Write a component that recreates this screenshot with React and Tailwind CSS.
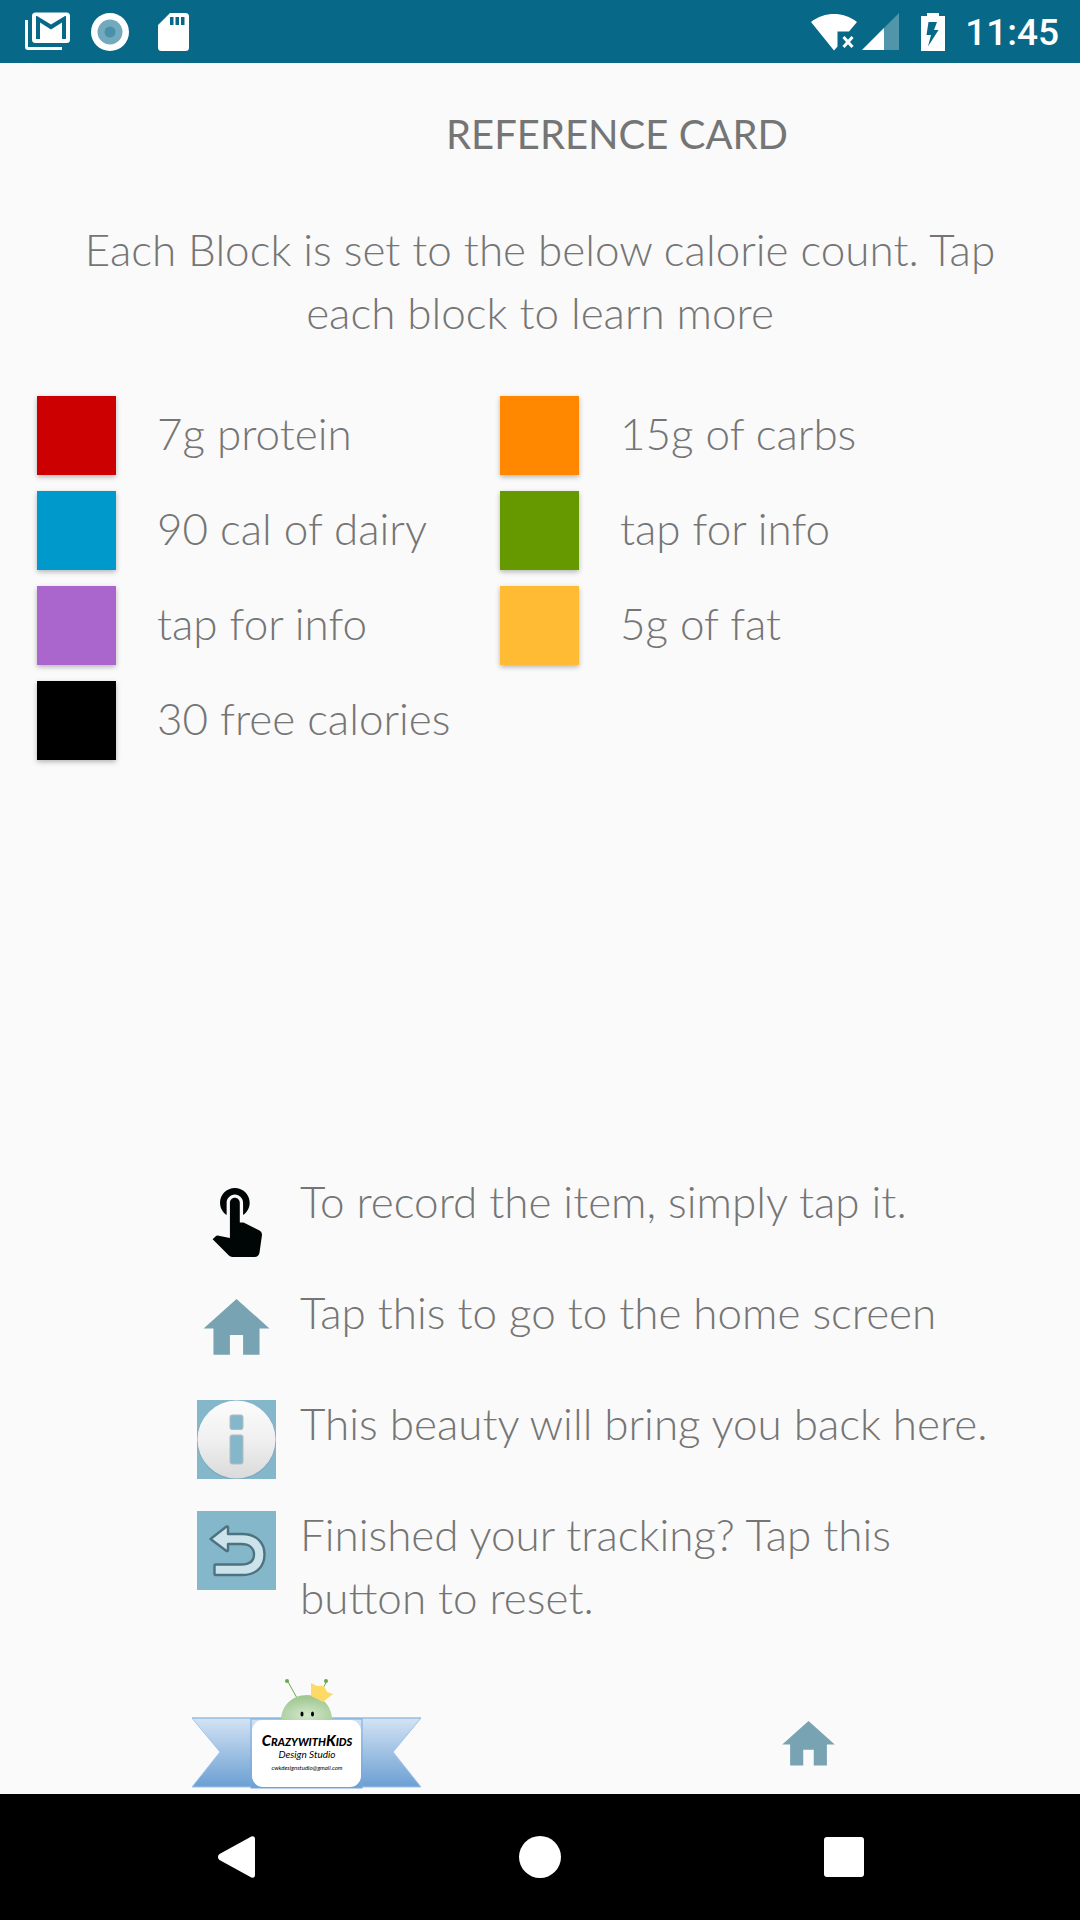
import React from "react";

const BLOCKS = [
  { label: "7g protein", color: "bg-[#cc0000]" },
  { label: "15g of carbs", color: "bg-[#ff8800]" },
  { label: "90 cal of dairy", color: "bg-[#0099cc]" },
  { label: "tap for info", color: "bg-[#669900]" },
  { label: "tap for info", color: "bg-[#aa66cc]" },
  { label: "5g of fat", color: "bg-[#ffbb33]" },
  { label: "30 free calories", color: "bg-black" },
];

function StatusBar() {
  return (
    <header className="flex h-[63px] shrink-0 items-center justify-between bg-[#076887] pr-[21px] pl-6 text-white">
      <div className="flex items-center">
        <svg className="h-[40px] w-[46px]" viewBox="0 0 46 40" aria-label="Mail">
          <path d="M1 8h3v27h34v3H4a3 3 0 0 1-3-3z" fill="currentColor" />
          <rect x="8" y="0.500" width="38" height="30.500" rx="3.500" fill="currentColor" />
          <path d="M12 27V4h1l14 8.500L41 4h1v23h-4V10.500L27 17.500l-11-7V27z" fill="#076887" />
        </svg>
        <svg className="ml-[21px] h-[38px] w-[38px]" viewBox="0 0 38 38" aria-label="Recording">
          <circle cx="19" cy="19" r="19" fill="#fff" />
          <circle cx="19" cy="19" r="12.500" fill="#73a9bd" />
          <circle cx="19" cy="19" r="5.500" fill="#4a90a9" />
        </svg>
        <svg className="ml-[29px] h-[38px] w-[31px]" viewBox="0 0 31 38" aria-label="SD card">
          <path d="M12 0h15.500A3.500 3.500 0 0 1 31 3.500v31a3.500 3.500 0 0 1-3.500 3.500h-24A3.500 3.500 0 0 1 0 34.500V12zM12 4v8h3.500V4zm5.500 0v8H21V4zM23 4v8h3.500V4z" fill="currentColor" fillRule="evenodd" />
        </svg>
      </div>
      <div className="flex items-center">
        <svg className="h-[38px] w-[46px]" viewBox="0 0 46 38" aria-label="No Wi-Fi connection">
          <path d="M0 9C7 3.500 15 1 23 1s16 2.500 23 8l-8 9.500H26.500v15L23 37.500z" fill="currentColor" />
          <path d="m32.500 24 9 10m0-10-9 10" stroke="currentColor" strokeWidth="3" />
        </svg>
        <svg className="ml-[5px] h-[38px] w-[37px]" viewBox="0 0 37 38" aria-label="Signal">
          <path d="M37 0v37H0z" fill="#fff" opacity="0.300" />
          <path d="M22 15v22H0z" fill="#fff" />
        </svg>
        <svg className="ml-[22px] h-[38px] w-[24px]" viewBox="0 0 24 38" aria-label="Battery charging">
          <path d="M6 0h12v3h6v35H0V3h6zM7.500 9 5.500 22H10L7 33.500 17.500 17H13l3-8z" fill="currentColor" fillRule="evenodd" />
        </svg>
        <span className="ml-5 pt-0.5 font-['Roboto',sans-serif] text-[37px] leading-[44px] font-medium">11:45</span>
      </div>
    </header>
  );
}

function HomeIcon({ className }) {
  return (
    <svg className={className} viewBox="0 0 24 24" fill="#78a3b2" aria-hidden="true">
      <path d="M10 20v-6h4v6h5v-8h3L12 3 2 12h3v8z" />
    </svg>
  );
}

function TouchIcon() {
  return (
    <svg className="size-[79px]" viewBox="0 0 24 24" fill="#000605" aria-hidden="true">
      <path d="M9 11.240V7.500C9 6.120 10.120 5 11.500 5S14 6.120 14 7.500v3.740c1.210-.810 2-2.180 2-3.740C16 5.010 13.990 3 11.500 3S7 5.010 7 7.500c0 1.560.790 2.930 2 3.740zm9.840 4.630l-4.540-2.260c-.170-.070-.350-.110-.540-.110H13v-6c0-.830-.670-1.500-1.500-1.500S10 6.670 10 7.500v10.740l-3.430-.720c-.080-.010-.150-.030-.240-.030-.310 0-.590.130-.790.330l-.790.800 4.940 4.940c.270.270.650.440 1.060.440h6.790c.750 0 1.330-.550 1.440-1.280l.750-5.270c.010-.070.020-.140.020-.200 0-.620-.380-1.160-.910-1.380z" />
    </svg>
  );
}

function InfoIcon() {
  return (
    <svg className="size-[79px]" viewBox="0 0 79 79" aria-hidden="true">
      <defs>
        <linearGradient id="disc" x1="0" y1="0" x2="0" y2="1">
          <stop offset="0" stopColor="#fcfcfc" />
          <stop offset="0.500" stopColor="#f0f0f0" />
          <stop offset="1" stopColor="#dadada" />
        </linearGradient>
      </defs>
      <rect width="79" height="79" fill="#84b7ca" />
      <circle cx="39.500" cy="40" r="39.500" fill="#6f9aaa" opacity="0.500" />
      <circle cx="39.500" cy="39.500" r="39" fill="url(#disc)" />
      <g fill="#84b7ca" stroke="#b4bcbf">
        <rect x="33" y="15" width="13" height="14.500" rx="2" />
        <rect x="33" y="35" width="13" height="29" rx="2" />
      </g>
    </svg>
  );
}

function ResetIcon() {
  return (
    <svg className="size-[79px]" viewBox="0 0 79 79" aria-hidden="true">
      <rect width="79" height="79" fill="#84b7ca" />
      <path d="M13.500 28 29.500 15.500a1 1 0 0 1 1.500 1V23h14c14 0 22.500 8 22.500 20.500S59 64 45 64H18.500a1 1 0 0 1-1-1v-8.500a1 1 0 0 1 1-1H44c8.500 0 13-3.500 13-10S52.500 33 44 33H31v6a1 1 0 0 1-1.500 1z" fill="#cde3eb" stroke="#4d7280" strokeWidth="2.400" strokeLinejoin="round" />
    </svg>
  );
}

function StudioLogo() {
  return (
    <svg className="h-[110px] w-[230px]" viewBox="0 0 230 110" role="img" aria-label="CrazywithKids Design Studio">
      <defs>
        <linearGradient id="ribbon" x1="0" y1="0" x2="0" y2="1">
          <stop offset="0" stopColor="#d3e3f4" />
          <stop offset="1" stopColor="#6c9fd3" />
        </linearGradient>
        <radialGradient id="head" cx="0.500" cy="0.800" r="0.700">
          <stop offset="0" stopColor="#d3e7cc" />
          <stop offset="1" stopColor="#a1c892" />
        </radialGradient>
      </defs>
      <path d="M0 39h229l-28 34 28 35H0l28-35z" fill="url(#ribbon)" stroke="#a0c3e7" />
      <path d="M0 39h229" stroke="#94b9e0" />
      <path d="M59 40h29l-3 2H59zm83 0h28v2h-26z" fill="#7eaadb" />
      <rect x="59" y="40" width="111" height="69" fill="url(#ribbon)" stroke="#79a9da" />
      <path d="M95 1l10 18m26-10 4-7" stroke="#6aa84f" />
      <circle cx="95" cy="2" r="2" fill="#6aa84f" />
      <circle cx="134" cy="2" r="2" fill="#6aa84f" />
      <path d="M89 41c0-14 11-25 26-25s25 11 25 25z" fill="url(#head)" />
      <path d="M119 4l6 3 7 0 3 6 6 2-10 8-12-6z" fill="#ffd966" />
      <ellipse cx="110" cy="35" rx="1.500" ry="2.500" />
      <ellipse cx="120.500" cy="35" rx="1.500" ry="2.500" />
      <rect x="60" y="41" width="109" height="67" rx="11" fill="#fff" />
      <g textAnchor="middle" fontFamily="Lato, sans-serif" fontStyle="italic">
        <text x="115" y="67" fontSize="15" fontWeight="900" fontVariant="small-caps">CrazywithKids</text>
        <text x="115" y="79" fontSize="10" fontWeight="400">Design Studio</text>
        <text x="115" y="91" fontSize="6" fontWeight="400">cwkdesignstudio@gmail.com</text>
      </g>
    </svg>
  );
}

const HELP = [
  { text: "To record the item, simply tap it.", icon: <TouchIcon /> },
  { text: "Tap this to go to the home screen", icon: <HomeIcon className="size-[79px]" /> },
  { text: "This beauty will bring you back here.", icon: <InfoIcon /> },
  { text: "Finished your tracking? Tap this button to reset.", icon: <ResetIcon /> },
];

function NavBar() {
  return (
    <nav className="grid h-[126px] shrink-0 grid-cols-3 bg-black px-[84px] text-white">
      <button type="button" aria-label="Back" className="flex items-center justify-center">
        <svg className="h-[42px] w-[37px]" viewBox="0 0 37 42" fill="currentColor">
          <path d="M1.500 18 32 1.200C34.500-.500 37 0 37 3v36c0 3-2.500 3.500-5 1.800L1.500 24c-2-1.500-2-4.500 0-6z" />
        </svg>
      </button>
      <button type="button" aria-label="Home" className="flex items-center justify-center">
        <span className="size-[42px] rounded-full bg-white" />
      </button>
      <button type="button" aria-label="Recent apps" className="flex items-center justify-center">
        <span className="size-10 rounded-[3px] bg-white" />
      </button>
    </nav>
  );
}

export default function App() {
  return (
    <div className="flex min-h-screen flex-col bg-[#fafafa] font-['Lato',sans-serif] text-[44px] leading-[63px] font-light text-[#757575]">
      <StatusBar />
      <main className="flex flex-1 flex-col">
        <h1 className="pt-10 pl-[154px] text-center text-[40px] font-normal">REFERENCE CARD</h1>
        <p className="mt-[52px] px-[72px] text-center">
          Each Block is set to the below calorie count. Tap each block to learn more
        </p>
        <div className="mt-[52px] grid grid-cols-[463px_1fr] gap-y-4 pl-[37px]">
          {BLOCKS.map((b, i) => (
            <div key={i} className="flex items-center">
              <button type="button" aria-labelledby={"block-" + i} className={"size-[79px] shadow-[0_2px_5px_rgba(0,0,0,0.28)] " + b.color} />
              <span id={"block-" + i} className="ml-[41px] pb-1">{b.label}</span>
            </div>
          ))}
        </div>
        <ul className="mt-auto flex flex-col pr-[84px] pl-[197px]">
          {HELP.map((h) => (
            <li key={h.text} className="flex min-h-[111px] items-start">
              <span className="shrink-0 pt-2">{h.icon}</span>
              <span className="ml-6">{h.text}</span>
            </li>
          ))}
        </ul>
        <footer className="mt-[50px] flex items-center justify-between pr-[240px] pb-[5px] pl-[192px]">
          <StudioLogo />
          <button type="button" aria-label="Home screen" className="pt-5">
            <HomeIcon className="size-[63px]" />
          </button>
        </footer>
      </main>
      <NavBar />
    </div>
  );
}
